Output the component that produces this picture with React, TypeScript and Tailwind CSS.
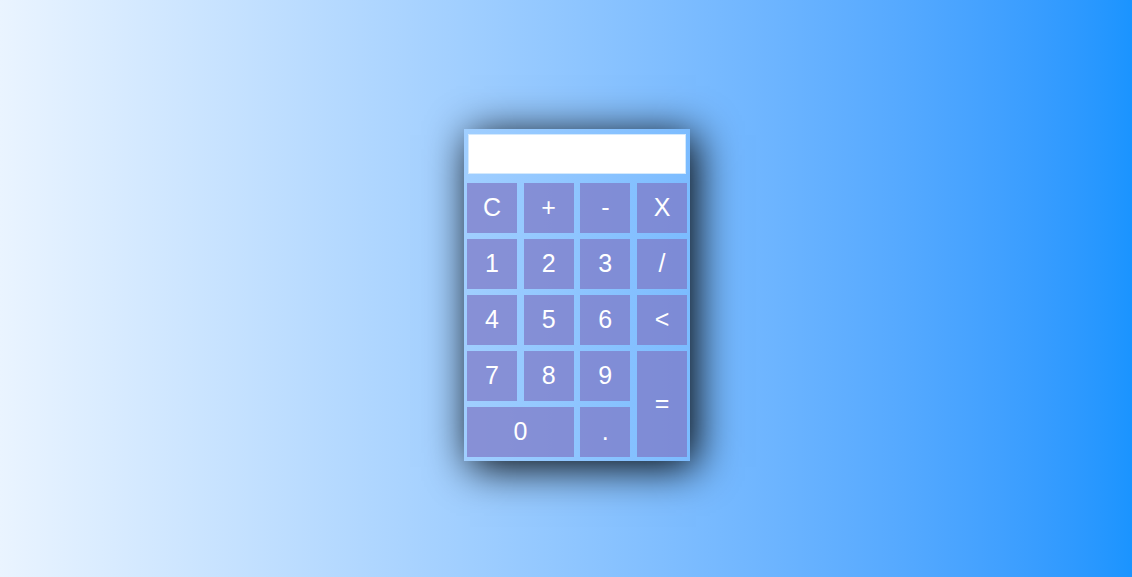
import React from "react";

const btn =
  "flex items-center justify-center pb-[2px] bg-[#7e76c4]/70 text-white text-[25px] leading-none select-none";

export default function App() {
  const rows = [
    ["C", "+", "-", "X"],
    ["1", "2", "3", "/"],
    ["4", "5", "6", "<"],
  ];
  return (
    <div
      className="w-[1132px] h-[577px] flex items-center justify-center pl-[22px] pt-[13px] bg-gradient-to-r from-[#eaf4ff] to-[#1a94ff]"
      style={{ fontFamily: '"Liberation Sans", Arial, sans-serif' }}
    >
      <div className="w-[226px] h-[332px] flex flex-col pt-[5px] px-[3px] shadow-[6px_6px_40px_rgba(0,0,0,1)]">
        <div className="mx-[1px] h-[40px] bg-white border border-[#d4e9fc]" />
        <div className="mt-[9px] grid grid-cols-[repeat(4,50px)] auto-rows-[50px] gap-x-[6.67px] gap-y-[6px]">
          {rows.flat().map((k, i) => (
            <div key={i} className={btn}>
              {k}
            </div>
          ))}
          <div className={btn}>7</div>
          <div className={btn}>8</div>
          <div className={btn}>9</div>
          <div className={`${btn} row-span-2`}>=</div>
          <div className={`${btn} col-span-2`}>0</div>
          <div className={btn}>.</div>
        </div>
      </div>
    </div>
  );
}
